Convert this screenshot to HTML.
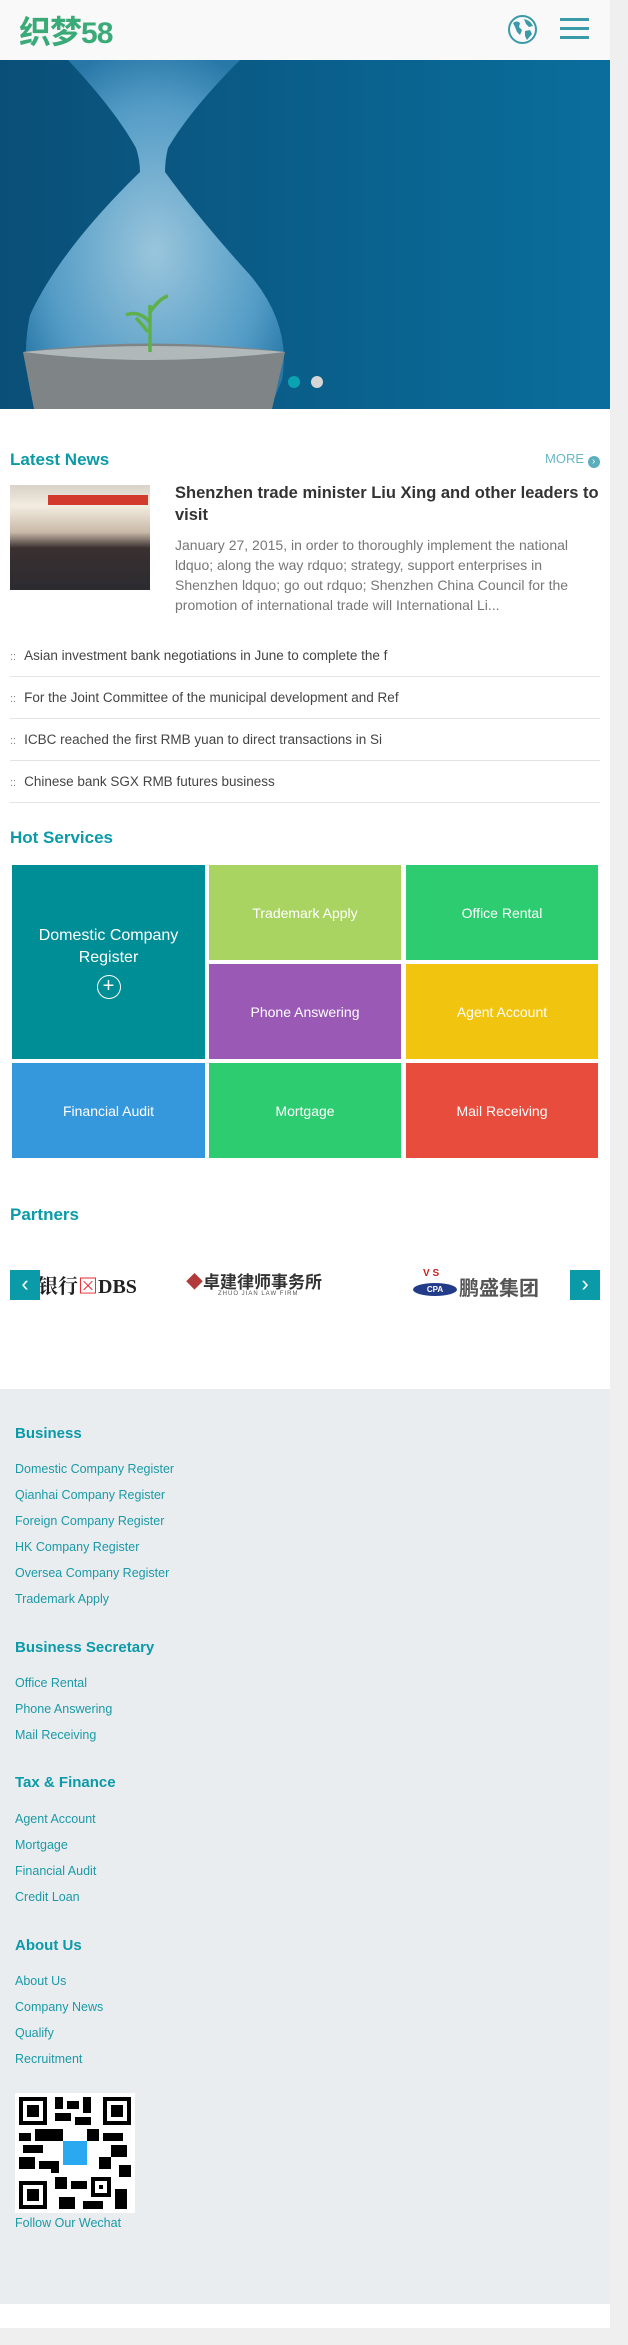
<!DOCTYPE html>
<html><head><meta charset="utf-8">
<style>
*{margin:0;padding:0;box-sizing:border-box}
body{width:628px;height:2345px;background:#efefef;font-family:"Liberation Sans","Noto Sans CJK SC",sans-serif;position:relative;overflow:hidden}
.a{position:absolute}
.main{position:absolute;left:0;top:0;width:610px;height:1389px;background:#fff}
.h2{position:absolute;left:10px;font-size:17px;font-weight:bold;color:#0a9aa8;line-height:20px}
.li{position:absolute;left:10px;width:590px;height:42px;border-bottom:1px solid #e3e3e3;font-size:13.5px;color:#444;line-height:42px;white-space:nowrap;overflow:hidden}
.li b{font-weight:normal;color:#888;margin-right:8px;font-size:11px}
.t{position:absolute;color:#fff;font-size:14px;display:flex;align-items:center;justify-content:center;text-align:center}
.ft{position:absolute;left:0;top:1389px;width:610px;height:915px;background:#eaedf0}
.fh{position:absolute;left:15px;font-size:15px;font-weight:bold;color:#0a9aa8}
.fl{position:absolute;left:15px;font-size:12.5px;color:#1a9aa6}
</style></head><body>
<div class="main"></div>
<!-- header -->
<div class="a" style="left:0;top:0;width:610px;height:60px;background:#f9f9f9"></div>
<div class="a" style="left:19px;top:11px;font-size:32px;line-height:38px;color:#3aaa78;font-family:'Noto Sans CJK SC','Liberation Sans',sans-serif;font-weight:bold;letter-spacing:-1px">织梦<span style="font-family:'Liberation Sans';font-weight:bold;font-size:30px">58</span></div>
<svg class="a" style="left:507px;top:14px" width="31" height="31" viewBox="0 0 31 31"><circle cx="15.5" cy="15.5" r="13.5" fill="none" stroke="#3a9aa8" stroke-width="2"/><path d="M6 9 Q10 6 13 9 L12 13 L15 16 L13 21 L10 18 L8 13Z M17 5 Q23 6 26 12 L22 13 L19 10Z M18 17 L23 16 L25 20 L20 26 L18 22Z" fill="#3a9aa8"/></svg>
<div class="a" style="left:560px;top:18px;width:29px;height:3px;background:#3a9aa8"></div>
<div class="a" style="left:560px;top:27px;width:29px;height:3px;background:#3a9aa8"></div>
<div class="a" style="left:560px;top:36px;width:29px;height:3px;background:#3a9aa8"></div>
<!-- banner -->
<svg class="a" style="left:0;top:60px" width="610" height="349" viewBox="0 0 610 349">
<defs><linearGradient id="bg" x1="0" x2="1"><stop offset="0" stop-color="#0a4f78"/><stop offset="1" stop-color="#0a6e9c"/></linearGradient>
<radialGradient id="dr" cx="0.5" cy="0.55" r="0.6"><stop offset="0" stop-color="#a6cfe4"/><stop offset="0.7" stop-color="#5aa2cc"/><stop offset="1" stop-color="#2a7aaa"/></radialGradient></defs>
<rect width="610" height="349" fill="url(#bg)"/>
<path d="M68 0 L240 0 Q190 50 168 88 Q165 100 165 112 Q200 160 250 215 Q292 265 282 320 L270 349 L35 349 Q20 300 30 255 Q60 190 140 112 Q140 100 136 88 Q115 50 68 0Z" fill="url(#dr)" opacity="0.92"/>
<path d="M23 292 Q150 275 285 292 L272 349 L34 349Z" fill="#7f8586"/>
<path d="M23 292 Q150 280 285 292 Q150 308 23 292Z" fill="#b0b8ba"/>
<path d="M150 292 L150 245 M150 262 Q138 250 126 255 M150 252 Q160 238 168 236 M148 272 Q140 262 136 258" stroke="#5db04a" stroke-width="3.5" fill="none"/>
<circle cx="294" cy="322" r="6" fill="#0aa3b3"/><circle cx="317" cy="322" r="6" fill="#d6d6d6"/>
</svg>
<!-- latest news -->
<div class="h2" style="top:450px">Latest News</div>
<div class="a" style="left:545px;top:451px;font-size:13px;color:#6ab7c6">MORE <span style="display:inline-block;width:12px;height:12px;border-radius:50%;background:#5aaec0;color:#fff;font-size:10px;line-height:12px;text-align:center;vertical-align:-1px">›</span></div>
<div class="a" style="left:10px;top:485px;width:140px;height:105px;background:linear-gradient(#d8d2c8 0,#f2ede0 20%,#c9b9a8 45%,#3a3030 60%,#2b2b30 100%)"><div style="margin:10px 0 0 38px;width:100px;height:10px;background:#d23a2e"></div></div>
<div class="a" style="left:175px;top:482px;width:425px;font-size:16.5px;font-weight:bold;color:#333;line-height:22px">Shenzhen trade minister Liu Xing and other leaders to visit</div>
<div class="a" style="left:175px;top:535px;width:425px;font-size:14px;color:#777;line-height:20px">January 27, 2015, in order to thoroughly implement the national ldquo; along the way rdquo; strategy, support enterprises in Shenzhen ldquo; go out rdquo; Shenzhen China Council for the promotion of international trade will International Li...</div>
<div class="li" style="top:635px"><b>::</b>Asian investment bank negotiations in June to complete the f</div>
<div class="li" style="top:677px"><b>::</b>For the Joint Committee of the municipal development and Ref</div>
<div class="li" style="top:719px"><b>::</b>ICBC reached the first RMB yuan to direct transactions in Si</div>
<div class="li" style="top:761px"><b>::</b>Chinese bank SGX RMB futures business</div>
<!-- hot services -->
<div class="h2" style="top:828px">Hot Services</div>
<div class="t" style="left:12px;top:865px;width:193px;height:194px;background:#008e96;font-size:16px;flex-direction:column;line-height:22px">Domestic Company<br>Register<span style="display:block;margin-top:6px;width:24px;height:24px;border:1.5px solid #fff;border-radius:50%;font-size:20px;line-height:20px">+</span></div>
<div class="t" style="left:209px;top:865px;width:192px;height:95px;background:#a9d462">Trademark Apply</div>
<div class="t" style="left:406px;top:865px;width:192px;height:95px;background:#2ecc71">Office Rental</div>
<div class="t" style="left:209px;top:964px;width:192px;height:95px;background:#9b59b6">Phone Answering</div>
<div class="t" style="left:406px;top:964px;width:192px;height:95px;background:#f1c40f">Agent Account</div>
<div class="t" style="left:12px;top:1063px;width:193px;height:95px;background:#3598dc">Financial Audit</div>
<div class="t" style="left:209px;top:1063px;width:192px;height:95px;background:#2ecc71">Mortgage</div>
<div class="t" style="left:406px;top:1063px;width:192px;height:95px;background:#e74c3c">Mail Receiving</div>
<!-- partners -->
<div class="h2" style="top:1205px">Partners</div>
<div class="a" style="left:38px;top:1270px;font-size:20px;font-weight:bold;color:#222;white-space:nowrap;font-family:'Liberation Serif','Noto Serif CJK SC',serif">银行<span style="color:#e8262c">⊠</span>DBS</div>
<div class="a" style="left:186px;top:1268px;font-size:17px;font-weight:bold;color:#333;font-family:'Noto Sans CJK SC',sans-serif;white-space:nowrap"><span style="color:#b33a3a">◆</span>卓建律师事务所</div>
<div class="a" style="left:218px;top:1291px;font-size:6px;color:#555;letter-spacing:1px">ZHUO JIAN LAW FIRM</div>
<div class="a" style="left:413px;top:1268px;width:44px;height:28px"><div style="position:absolute;left:0;bottom:0;width:44px;height:13px;border-radius:50%;background:#233c8a;color:#fff;font-size:8px;text-align:center;line-height:13px;font-weight:bold">CPA</div><div style="position:absolute;left:10px;top:0;width:24px;height:14px;color:#c22;font-size:10px;font-weight:bold">V S</div></div>
<div class="a" style="left:459px;top:1272px;font-size:20px;font-weight:bold;color:#555;font-family:'Noto Sans CJK SC',sans-serif">鹏盛集团</div>
<div class="a" style="left:10px;top:1270px;width:30px;height:30px;background:#0a9aa8;color:#fff;font-size:22px;line-height:28px;text-align:center">‹</div>
<div class="a" style="left:570px;top:1270px;width:30px;height:30px;background:#0a9aa8;color:#fff;font-size:22px;line-height:28px;text-align:center">›</div>
<!-- footer -->
<div class="ft"></div>
<div class="fh" style="top:1425px">Business</div>
<div class="fl" style="top:1462px">Domestic Company Register</div>
<div class="fl" style="top:1488px">Qianhai Company Register</div>
<div class="fl" style="top:1514px">Foreign Company Register</div>
<div class="fl" style="top:1540px">HK Company Register</div>
<div class="fl" style="top:1566px">Oversea Company Register</div>
<div class="fl" style="top:1592px">Trademark Apply</div>
<div class="fh" style="top:1639px">Business Secretary</div>
<div class="fl" style="top:1676px">Office Rental</div>
<div class="fl" style="top:1702px">Phone Answering</div>
<div class="fl" style="top:1728px">Mail Receiving</div>
<div class="fh" style="top:1774px">Tax &amp; Finance</div>
<div class="fl" style="top:1812px">Agent Account</div>
<div class="fl" style="top:1838px">Mortgage</div>
<div class="fl" style="top:1864px">Financial Audit</div>
<div class="fl" style="top:1890px">Credit Loan</div>
<div class="fh" style="top:1937px">About Us</div>
<div class="fl" style="top:1974px">About Us</div>
<div class="fl" style="top:2000px">Company News</div>
<div class="fl" style="top:2026px">Qualify</div>
<div class="fl" style="top:2052px">Recruitment</div>
<svg class="a" style="left:15px;top:2093px" width="120" height="120" viewBox="0 0 30 30">
<rect width="30" height="30" fill="#fff"/>
<g fill="#000">
<rect x="1" y="1" width="7" height="7"/><rect x="22" y="1" width="7" height="7"/><rect x="1" y="22" width="7" height="7"/>
<rect x="10" y="1" width="2" height="3"/><rect x="13" y="2" width="3" height="2"/><rect x="17" y="1" width="2" height="4"/><rect x="10" y="5" width="4" height="2"/><rect x="15" y="6" width="4" height="2"/>
<rect x="1" y="10" width="3" height="2"/><rect x="5" y="9" width="4" height="3"/><rect x="2" y="13" width="5" height="2"/><rect x="1" y="16" width="4" height="3"/><rect x="6" y="17" width="3" height="2"/>
<rect x="22" y="10" width="5" height="2"/><rect x="24" y="13" width="4" height="3"/><rect x="21" y="16" width="3" height="3"/><rect x="26" y="18" width="3" height="3"/>
<rect x="10" y="21" width="3" height="3"/><rect x="14" y="22" width="4" height="2"/><rect x="19" y="21" width="5" height="5"/><rect x="11" y="26" width="4" height="3"/><rect x="17" y="27" width="5" height="2"/><rect x="25" y="24" width="3" height="5"/>
<rect x="9" y="9" width="3" height="3"/><rect x="18" y="9" width="3" height="3"/><rect x="9" y="17" width="2" height="3"/>
</g>
<g fill="#fff"><rect x="2" y="2" width="5" height="5"/><rect x="23" y="2" width="5" height="5"/><rect x="2" y="23" width="5" height="5"/><rect x="20" y="22" width="3" height="3"/></g>
<g fill="#000"><rect x="3" y="3" width="3" height="3"/><rect x="24" y="3" width="3" height="3"/><rect x="3" y="24" width="3" height="3"/><rect x="21" y="23" width="1" height="1"/></g>
<rect x="12" y="12" width="6" height="6" fill="#2aa8f0"/>
</svg>
<div class="fl" style="top:2216px">Follow Our Wechat</div>
<div class="a" style="left:0;top:2304px;width:610px;height:24px;background:#fff"></div>
</body></html>
